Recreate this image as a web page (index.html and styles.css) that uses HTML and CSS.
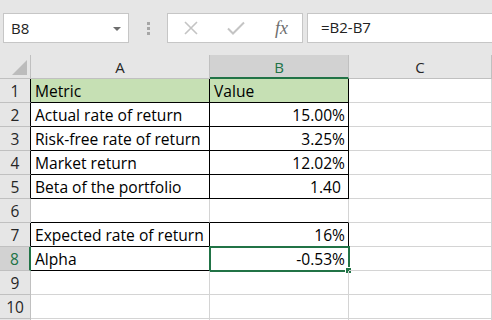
FILE: index.html
```html
<!DOCTYPE html>
<html lang="en">
<head>
    <meta charset="UTF-8">
    <title>Alpha - Excel</title>
    <link rel="stylesheet" href="styles.css">
</head>
<body>
<div class="formula-bar">
    <div class="name-box">
        <span>B8</span>
        <svg class="caret" width="8" height="4" viewBox="0 0 8 4"><path d="M0 0h8L4 4z" fill="#6d6d6d"/></svg>
    </div>
    <div class="dots"><i></i><i></i><i></i></div>
    <div class="fx-buttons">
        <svg width="16" height="16" viewBox="0 0 16 16"><path d="M2 2L14 14M14 2L2 14" stroke="#c4c4c4" stroke-width="1.6" fill="none"/></svg>
        <svg width="18" height="16" viewBox="0 0 18 16"><path d="M1 8.5L6 13.5L17 2.5" stroke="#c4c4c4" stroke-width="2" fill="none"/></svg>
        <span class="fx">fx</span>
    </div>
    <div class="formula-input">=B2-B7</div>
</div>
<div class="sheet">
    <div class="corner"><svg width="15" height="15" viewBox="0 0 15 15"><path d="M15 0V15H0z" fill="#bcbcbc"/></svg></div>
    <div class="col-head">A</div>
    <div class="col-head sel">B</div>
    <div class="col-head">C</div>

    <div class="row-head bk">1</div>
    <div class="cell hdr bk-r bk-b">Metric</div>
    <div class="cell hdr bk-r bk-b">Value</div>
    <div class="cell"></div>

    <div class="row-head bk">2</div>
    <div class="cell bk-r bk-b">Actual rate of return</div>
    <div class="cell num bk-r bk-b">15.00%</div>
    <div class="cell"></div>

    <div class="row-head bk">3</div>
    <div class="cell bk-r bk-b">Risk-free rate of return</div>
    <div class="cell num bk-r bk-b">3.25%</div>
    <div class="cell"></div>

    <div class="row-head bk">4</div>
    <div class="cell bk-r bk-b">Market return</div>
    <div class="cell num bk-r bk-b">12.02%</div>
    <div class="cell"></div>

    <div class="row-head bk">5</div>
    <div class="cell bk-r bk-b">Beta of the portfolio</div>
    <div class="cell num bk-r bk-b">1.40&nbsp;</div>
    <div class="cell"></div>

    <div class="row-head">6</div>
    <div class="cell bk-b"></div>
    <div class="cell bk-b"></div>
    <div class="cell"></div>

    <div class="row-head bk">7</div>
    <div class="cell bk-r bk-b">Expected rate of return</div>
    <div class="cell num bk-r bk-b">16%</div>
    <div class="cell"></div>

    <div class="row-head bk sel">8</div>
    <div class="cell bk-r bk-b">Alpha</div>
    <div class="cell num bk-r bk-b active">-0.53%<span class="handle"></span></div>
    <div class="cell"></div>

    <div class="row-head">9</div>
    <div class="cell"></div>
    <div class="cell"></div>
    <div class="cell"></div>

    <div class="row-head">10</div>
    <div class="cell"></div>
    <div class="cell"></div>
    <div class="cell"></div>

    <div class="row-head"></div>
    <div class="cell"></div>
    <div class="cell"></div>
    <div class="cell"></div>
</div>
</body>
</html>
```

FILE: styles.css
```css
body {
    margin: 0;
    width: 492px;
    height: 320px;
    overflow: hidden;
    background: #fff;
    font-family: 'Open Sans', 'Liberation Sans', sans-serif;
    font-size: 15px;
    color: #000;
}
.formula-bar {
    height: 55px;
    background: #e6e6e6;
    display: flex;
    align-items: flex-start;
    padding-top: 13px;
    box-sizing: border-box;
}
.name-box {
    margin-left: 3px;
    width: 126px;
    height: 30px;
    box-sizing: border-box;
    background: #fff;
    border: 1px solid #c6c6c6;
    display: flex;
    align-items: center;
    justify-content: space-between;
    padding: 0 7px 0 7px;
    color: #222;
}
.caret {
    margin-top: 1px;
}
.dots {
    width: 38px;
    height: 30px;
    display: flex;
    flex-direction: column;
    align-items: center;
    justify-content: center;
    gap: 2px;
}
.dots i {
    width: 3px;
    height: 3px;
    background: #a6a6a6;
}
.fx-buttons {
    width: 136px;
    height: 30px;
    box-sizing: border-box;
    background: #fff;
    border: 1px solid #c6c6c6;
    display: flex;
    align-items: center;
    padding-left: 15px;
    gap: 28px;
}
.fx {
    font-family: 'Liberation Serif', 'Times New Roman', serif;
    font-style: italic;
    font-size: 18px;
    color: #6e6e6e;
    margin-left: 2px;
}
.formula-input {
    margin-left: 4px;
    flex: 1;
    height: 30px;
    box-sizing: border-box;
    background: #fff;
    border: 1px solid #c6c6c6;
    border-right: none;
    padding-left: 13px;
    line-height: 27px;
    color: #222;
}
.sheet {
    display: grid;
    grid-template-columns: 31px 179px 139px 1fr;
    grid-template-rows: repeat(12, 24px);
}
.corner, .col-head, .row-head {
    background: #e6e6e6;
    box-sizing: border-box;
    border-right: 1px solid #c0c0c0;
    border-bottom: 1px solid #c0c0c0;
    color: #262626;
}
.corner {
    display: flex;
    align-items: flex-end;
    justify-content: flex-end;
    padding: 0 3px 3px 0;
}
.col-head {
    display: flex;
    align-items: center;
    justify-content: center;
    line-height: 20px;
    padding-top: 1px;
}
.col-head.sel {
    background: #d2d2d2;
    color: #217346;
    border-bottom: 2px solid #217346;
}
.row-head {
    display: flex;
    align-items: flex-end;
    justify-content: center;
    line-height: 20px;
    padding-bottom: 1px;
    font-size: 15.5px;
}
.row-head.bk {
    border-right-color: #000;
}
.row-head.sel {
    background: #d2d2d2;
    color: #217346;
    border-right: 2px solid #217346;
}
.cell {
    box-sizing: border-box;
    border-right: 1px solid #d4d4d4;
    border-bottom: 1px solid #d4d4d4;
    padding: 0 3px 1px 4px;
    line-height: 20px;
    font-size: 15.6px;
    display: flex;
    align-items: flex-end;
    white-space: nowrap;
    position: relative;
}
.cell.hdr {
    background: #c6e0b4;
}
.cell.num {
    justify-content: flex-end;
}
.bk-r {
    border-right-color: #000;
}
.bk-b {
    border-bottom-color: #000;
}
.active {
    outline: 2px solid #217346;
    outline-offset: -1px;
}
.handle {
    position: absolute;
    right: -4px;
    bottom: -4px;
    width: 5px;
    height: 5px;
    background: #217346;
    border: 1px solid #fff;
}
```
